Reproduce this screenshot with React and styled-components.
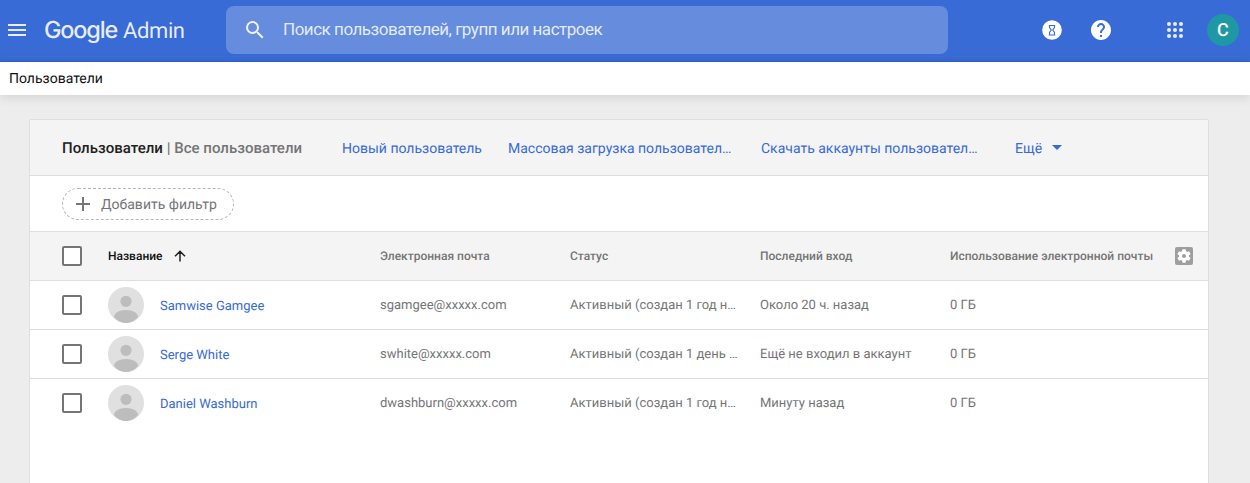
import React from "react";
import styled, { createGlobalStyle } from "styled-components";

const Global = createGlobalStyle`
  * { box-sizing: border-box; }
  html, body { margin: 0; background: #ededed; }
  body { font-family: Roboto, "Liberation Sans", sans-serif; overflow: hidden; text-rendering: geometricPrecision; }
`;

const Page = styled.div`
  height: 483px;
  display: flex;
  flex-direction: column;
  overflow: hidden;
`;

const TopBar = styled.header`
  height: 62px;
  flex: none;
  display: flex;
  align-items: flex-start;
  background: #386bd5;
  border-bottom: 1px solid #3161c6;
`;

const MenuButton = styled.div`
  width: 34px;
  height: 60px;
  padding: 24px 0 0 8px;
  svg { display: block; }
`;

const Logo = styled.div`
  width: 191px;
  flex: none;
  height: 60px;
  padding-left: 10px;
  display: flex;
  align-items: baseline;
  line-height: 60px;
  color: rgba(255, 255, 255, 0.88);
  white-space: nowrap;
`;

const LogoWord = styled.span`
  font-family: ${(p) => p.$font}, sans-serif;
  font-size: ${(p) => p.$size}px;
  font-weight: ${(p) => p.$weight};
  letter-spacing: ${(p) => p.$spacing}px;
  margin-right: ${(p) => p.$gap || 0}px;
`;

const Search = styled.div`
  width: 722px;
  height: 48px;
  margin: 6px 0 0 1px;
  padding-left: 17px;
  display: flex;
  align-items: center;
  border-radius: 8px;
  background: #668ddd;
  svg { flex: none; margin-right: 16px; }
`;

const Placeholder = styled.span`
  font-size: 17px;
  line-height: 48px;
  letter-spacing: ${(p) => p.$spacing}px;
  color: rgba(255, 255, 255, 0.84);
  white-space: nowrap;
`;

const Actions = styled.div`
  height: 60px;
  margin-left: auto;
  padding-right: 11px;
  display: flex;
  align-items: center;
`;

const Action = styled.div`
  width: 24px;
  height: 24px;
  margin-right: ${(p) => p.$gap}px;
  svg { display: block; }
`;

const Avatar = styled.div`
  width: 32px;
  height: 32px;
  border-radius: 50%;
  background: #1f97a5;
  color: #fff;
  font-size: 18px;
  font-weight: 500;
  line-height: 33px;
  text-align: center;
`;

const Crumbs = styled.nav`
  height: 33px;
  flex: none;
  padding-left: 9px;
  background: #fff;
  color: #111;
  font-size: 14px;
  line-height: 34px;
  box-shadow: 0 2px 12px rgba(0, 0, 0, 0.12);
`;

const Card = styled.main`
  width: 1180px;
  flex: 1;
  margin: 24px 0 0 29px;
  background: #fff;
  border: 1px solid #dedede;
  border-bottom: 0;
  border-radius: 2px 2px 0 0;
`;

const Toolbar = styled.div`
  height: 56px;
  padding-left: 32px;
  display: flex;
  align-items: center;
  background: #f4f4f4;
  border-bottom: 1px solid #dedede;
`;

const Title = styled.h1`
  width: 280px;
  margin: 0;
  font-size: 15px;
  font-weight: 500;
  letter-spacing: 0.02px;
  color: #757575;
  white-space: nowrap;
  b { font-weight: 500; color: #212121; }
`;

const ToolLink = styled.a`
  width: ${(p) => p.$w}px;
  padding-top: 2px;
  display: flex;
  align-items: center;
  font-size: 14px;
  line-height: 18px;
  color: #386bd5;
  white-space: nowrap;
`;

const Caret = styled.i`
  margin: -3px 0 0 10px;
  border: 5px solid transparent;
  border-top-color: #386bd5;
  border-bottom: 0;
`;

const FilterBar = styled.div`
  height: 56px;
  padding-left: 32px;
  display: flex;
  align-items: center;
  border-bottom: 1px solid #dedede;
`;

const FilterChip = styled.div`
  width: 172px;
  height: 32px;
  padding-left: 12px;
  display: flex;
  align-items: center;
  gap: 10px;
  border: 1px dashed #b5b5b5;
  border-radius: 16px;
  font-size: 14px;
  line-height: 18px;
  color: #757575;
  white-space: nowrap;
  span { padding-top: 2px; }
`;

const Row = styled.div`
  height: 49px;
  padding-left: 32px;
  display: grid;
  grid-template-columns: 46px 272px 190px 190px 190px 225px 1fr;
  align-items: center;
  background: ${(p) => (p.$head ? "#f4f4f4" : "#fff")};
  border-bottom: 1px solid #dedede;
  &:last-child { border-bottom-color: transparent; }
`;

const Checkbox = styled.div`
  width: 20px;
  height: 20px;
  border: 2px solid #757575;
  border-radius: 2px;
  background: #fff;
`;

const Heading = styled.div`
  display: flex;
  align-items: center;
  font-size: 12px;
  font-weight: 500;
  color: ${(p) => (p.$active ? "#111" : "#757575")};
  white-space: nowrap;
  svg { margin-left: 11px; }
`;

const Cell = styled.div`
  padding-top: 2px;
  font-size: 13px;
  line-height: 16px;
  color: #757575;
  white-space: nowrap;
`;

const Person = styled.div`
  display: flex;
  align-items: center;
  gap: 16px;
  font-size: 13px;
  line-height: 16px;
  color: #386bd5;
  svg { flex: none; }
  span { padding-top: 4px; }
`;

const PersonIcon = () => (
  <svg width="36" height="36" viewBox="0 0 36 36">
    <circle cx="18" cy="18" r="18" fill="#e0e0e0" />
    <circle cx="18" cy="14.3" r="5.6" fill="#bdbdbd" />
    <path d="M6 30c0-4 5-7 12-7s12 3 12 7c-3 3.700-7.500 6-12 6s-9-2.300-12-6z" fill="#bdbdbd" />
  </svg>
);

const people = [
  ["Samwise Gamgee", "sgamgee@xxxxx.com", "Активный (создан 1 год н…", "Около 20 ч. назад", "0 ГБ"],
  ["Serge White", "swhite@xxxxx.com", "Активный (создан 1 день …", "Ещё не входил в аккаунт", "0 ГБ"],
  ["Daniel Washburn", "dwashburn@xxxxx.com", "Активный (создан 1 год н…", "Минуту назад", "0 ГБ"],
];

export default function App() {
  return (
    <Page>
      <Global />
      <TopBar>
        <MenuButton>
          <svg width="18" height="12" fill="#e7edfa"><path d="M0 0h18v2H0zM0 5h18v2H0zM0 10h18v2H0z" /></svg>
        </MenuButton>
        <Logo>
          <LogoWord $font="Inter" $size={23.5} $weight={500} $spacing={-1.2} $gap={6}>Google</LogoWord>
          <LogoWord $font="Roboto" $size={22} $weight={400} $spacing={-0.4}>Admin</LogoWord>
        </Logo>
        <Search>
          <svg width="24" height="24" viewBox="0 0 24 24" fill="#fff" fillOpacity=".9">
            <path d="M15.500 14h-.79l-.28-.27A6.471 6.471 0 0 0 16 9.500 6.500 6.500 0 1 0 9.500 16c1.610 0 3.090-.59 4.230-1.570l.27.28v.79l5 4.990L20.490 19l-4.990-5zm-6 0C7.010 14 5 11.990 5 9.500S7.010 5 9.500 5 14 7.010 14 9.500 11.990 14 9.500 14z" />
          </svg>
          <Placeholder $spacing={-0.48}>Поиск пользователей, групп или настроек</Placeholder>
        </Search>
        <Actions>
          <Action $gap={25}>
            <svg width="24" height="24" viewBox="0 0 24 24">
              <circle cx="12" cy="12" r="9.800" fill="#fff" />
              <path d="M9.500 7.500h5v2L12.700 12l1.800 2.500v2.500h-5v-2.500L11.300 12 9.500 9.500zM8.800 7.500h6.400M8.800 17h6.400" fill="none" stroke="#386bd5" strokeWidth="1.100" />
            </svg>
          </Action>
          <Action $gap={50}>
            <svg width="24" height="24" viewBox="0 0 24 24">
              <path fill="#fff" d="M12 2C6.480 2 2 6.480 2 12s4.480 10 10 10 10-4.480 10-10S17.520 2 12 2zm1 17h-2v-2h2v2zm2.070-7.750l-.9.920C13.450 12.900 13 13.500 13 15h-2v-.5c0-1.100.45-2.100 1.170-2.830l1.240-1.260c.37-.36.59-.86.59-1.410 0-1.100-.9-2-2-2s-2 .9-2 2H8c0-2.210 1.790-4 4-4s4 1.790 4 4c0 .88-.36 1.680-.93 2.250z" />
            </svg>
          </Action>
          <Action $gap={20}>
            <svg width="24" height="24" viewBox="0 0 24 24" fill="#e7edfa">
              {[6, 12, 18].map((y) => [6, 12, 18].map((x) => <circle key={x + "-" + y} cx={x} cy={y} r="2" />))}
            </svg>
          </Action>
          <Avatar>C</Avatar>
        </Actions>
      </TopBar>
      <Crumbs>Пользователи</Crumbs>
      <Card>
        <Toolbar>
          <Title><b>Пользователи</b> | Все пользователи</Title>
          <ToolLink $w={166}>Новый пользователь</ToolLink>
          <ToolLink $w={253}>Массовая загрузка пользовател…</ToolLink>
          <ToolLink $w={254}>Скачать аккаунты пользовател…</ToolLink>
          <ToolLink $w={60}>Ещё<Caret /></ToolLink>
        </Toolbar>
        <FilterBar>
          <FilterChip>
            <svg width="16" height="16" fill="#757575"><path d="M1 7h14v2H1zM7 1h2v14H7z" /></svg>
            <span>Добавить фильтр</span>
          </FilterChip>
        </FilterBar>
        <Row $head>
          <Checkbox />
          <Heading $active>
            Название
            <svg width="12" height="12" viewBox="0 0 12 12" fill="none" stroke="#212121" strokeWidth="1.500"><path d="M6 11.500V1.500M1 6.300l5-5 5 5" /></svg>
          </Heading>
          <Heading>Электронная почта</Heading>
          <Heading>Статус</Heading>
          <Heading>Последний вход</Heading>
          <Heading>Использование электронной почты</Heading>
          <svg width="18" height="18" viewBox="0 0 18 18">
            <rect width="18" height="18" rx="2" fill="#9e9e9e" />
            <g transform="translate(.96 .96) scale(.67)">
              <path fill="#fff" d="M19.430 12.980c.04-.32.070-.64.070-.98s-.03-.66-.07-.98l2.110-1.650c.19-.15.24-.42.12-.64l-2-3.460c-.12-.22-.39-.3-.61-.22l-2.490 1c-.52-.4-1.080-.73-1.690-.98l-.38-2.650C14.460 2.180 14.250 2 14 2h-4c-.25 0-.46.18-.49.42l-.38 2.650c-.61.25-1.170.59-1.690.98l-2.490-1c-.23-.09-.49 0-.61.22l-2 3.460c-.13.22-.07.49.12.64l2.110 1.650c-.04.32-.07.65-.07.980s.03.66.07.98l-2.110 1.650c-.19.15-.24.42-.12.64l2 3.460c.12.22.39.3.61.22l2.490-1c.52.4 1.080.73 1.690.98l.38 2.650c.03.24.24.42.49.42h4c.25 0 .46-.18.49-.42l.38-2.650c.61-.25 1.170-.59 1.690-.98l2.490 1c.23.09.49 0 .61-.22l2-3.460c.12-.22.07-.49-.12-.64l-2.110-1.650zM12 15c-1.650 0-3-1.350-3-3s1.350-3 3-3 3 1.350 3 3-1.350 3-3 3z" />
            </g>
          </svg>
        </Row>
        {people.map(([name, ...cells]) => (
          <Row key={name}>
            <Checkbox />
            <Person><PersonIcon /><span>{name}</span></Person>
            {cells.map((c, i) => <Cell key={i}>{c}</Cell>)}
          </Row>
        ))}
      </Card>
    </Page>
  );
}
